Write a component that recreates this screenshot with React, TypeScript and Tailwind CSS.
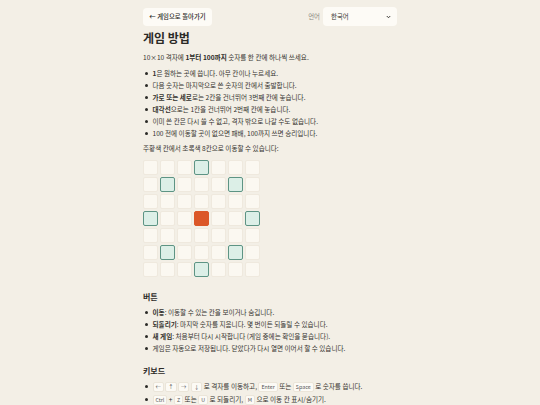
import React from 'react';

const FONT = { fontFamily: '"Noto Sans CJK KR", "Noto Sans", sans-serif' };

const moves = new Set(['3-0', '3-6', '0-3', '6-3', '1-1', '5-1', '1-5', '5-5']);

function Kbd({ children }: { children: React.ReactNode }) {
  return (
    <span className="inline-block rounded-[2px] border border-[#ebe5d9] bg-[#fcfaf5] px-[2px] leading-[8px] text-[5.3px] text-[#555] align-middle">
      {children}
    </span>
  );
}

function Bullet({ children }: { children: React.ReactNode }) {
  return (
    <li className="flex items-start gap-[5px]">
      <span className="mt-[5px] h-[2.5px] w-[2.5px] shrink-0 rounded-full bg-[#2b2a27]" />
      <span>{children}</span>
    </li>
  );
}

function Grid() {
  const cells = [];
  for (let r = 0; r < 7; r++) {
    for (let c = 0; c < 7; c++) {
      const key = `${c}-${r}`;
      let cls = 'bg-[#fbf8f1] border-[#efe9de]';
      if (r === 3 && c === 3) cls = 'bg-[#db5627] border-[#db5627]';
      else if (moves.has(key)) cls = 'bg-[#dcefe7] border-[#5d9484]';
      cells.push(<div key={key} className={`h-[15px] w-[15px] rounded-[2px] border ${cls}`} />);
    }
  }
  return <div className="grid w-max grid-cols-[repeat(7,15px)] gap-[2px]">{cells}</div>;
}

export default function App() {
  return (
    <div className="min-h-[405px] w-full bg-[#f3efe6] text-[#35332f]" style={FONT}>
      <div className="mx-auto w-[254px] pt-[7px]">
        <div className="flex h-[19px] items-center justify-between">
          <button className="flex h-[18px] w-[69px] items-center justify-center rounded-[4px] bg-[#fdfbf6] text-[6.4px] font-medium text-[#2b2a27]">
            ← 게임으로 돌아가기
          </button>
          <div className="flex items-center gap-[3px]">
            <span className="text-[6.4px] text-[#8b877f]">언어</span>
            <div className="flex h-[19px] w-[74px] items-center justify-between rounded-[4px] bg-[#fdfbf6] pl-[8px] pr-[6px] text-[6.4px]">
              <span>한국어</span>
              <svg width="5" height="4" viewBox="0 0 10 8"><path d="M1.5 2 L5 5.5 L8.5 2" fill="none" stroke="#2b2a27" strokeWidth="1.8" /></svg>
            </div>
          </div>
        </div>

        <h1 className="mt-[4px] text-[12px] font-bold leading-[16px] text-[#2b2a27]">게임 방법</h1>

        <p className="mt-[5px] text-[6.6px] leading-[12px]">
          10×10 격자에 <b className="text-[#2b2a27]">1부터 100까지</b> 숫자를 한 칸에 하나씩 쓰세요.
        </p>

        <ul className="mt-[4px] flex flex-col pl-[2px] text-[6.6px] leading-[12px]">
          <Bullet><b>1</b>은 원하는 곳에 씁니다. 아무 칸이나 누르세요.</Bullet>
          <Bullet>다음 숫자는 마지막으로 쓴 숫자의 칸에서 출발합니다.</Bullet>
          <Bullet><b>가로 또는 세로</b>로는 2칸을 건너뛰어 3번째 칸에 놓습니다.</Bullet>
          <Bullet><b>대각선</b>으로는 1칸을 건너뛰어 2번째 칸에 놓습니다.</Bullet>
          <Bullet>이미 쓴 칸은 다시 쓸 수 없고, 격자 밖으로 나갈 수도 없습니다.</Bullet>
          <Bullet>100 전에 이동할 곳이 없으면 패배, 100까지 쓰면 승리입니다.</Bullet>
        </ul>

        <p className="mt-[3px] text-[6.6px] leading-[12px]">주황색 칸에서 초록색 8칸으로 이동할 수 있습니다:</p>

        <div className="mt-[6px]">
          <Grid />
        </div>

        <h2 className="mt-[14px] text-[8px] font-bold leading-[12px] text-[#2b2a27]">버튼</h2>
        <ul className="mt-[3px] flex flex-col pl-[2px] text-[6.6px] leading-[12px]">
          <Bullet><b>이동</b>: 이동할 수 있는 칸을 보이거나 숨깁니다.</Bullet>
          <Bullet><b>되돌리기</b>: 마지막 숫자를 지웁니다. 몇 번이든 되돌릴 수 있습니다.</Bullet>
          <Bullet><b>새 게임</b>: 처음부터 다시 시작합니다 (게임 중에는 확인을 묻습니다).</Bullet>
          <Bullet>게임은 자동으로 저장됩니다. 닫았다가 다시 열면 이어서 할 수 있습니다.</Bullet>
        </ul>

        <h2 className="mt-[11px] text-[8px] font-bold leading-[12px] text-[#2b2a27]">키보드</h2>
        <ul className="mt-[3px] flex flex-col gap-[1px] pl-[2px] text-[6.6px] leading-[12px]">
          <Bullet>
            <Kbd>←</Kbd> <Kbd>↑</Kbd> <Kbd>→</Kbd> <Kbd>↓</Kbd> 로 격자를 이동하고, <Kbd>Enter</Kbd> 또는 <Kbd>Space</Kbd> 로 숫자를 씁니다.
          </Bullet>
          <Bullet>
            <Kbd>Ctrl</Kbd> + <Kbd>Z</Kbd> 또는 <Kbd>U</Kbd> 로 되돌리기, <Kbd>M</Kbd> 으로 이동 칸 표시/숨기기.
          </Bullet>
        </ul>
      </div>
    </div>
  );
}
